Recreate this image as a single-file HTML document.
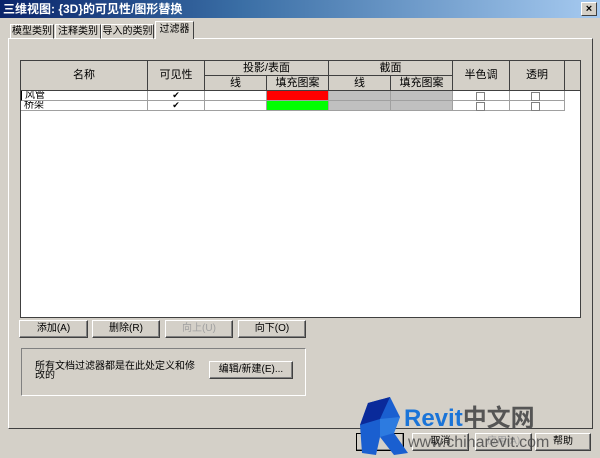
<!DOCTYPE html>
<html><head><meta charset="utf-8"><style>
*{margin:0;padding:0;box-sizing:border-box}
body{width:600px;height:458px;background:#d4d0c8;position:relative;overflow:hidden;font-family:"Liberation Sans","SimSun","Noto Sans CJK SC",sans-serif;font-size:11px;color:#000}
.a{position:absolute}
.title{left:0;top:0;width:600px;height:18px;background:linear-gradient(90deg,#0a246a 0%,#3a6ea5 40%,#a6caf0 100%);color:#fff;font-weight:bold;font-size:12px;line-height:18px;padding-left:3px}
.x{right:3px;top:2px;width:16px;height:14px;background:#d4d0c8;border:1px solid;border-color:#fff #404040 #404040 #fff;font-size:11px;line-height:12px;text-align:center;font-weight:bold;color:#000}
.tab{top:24px;height:15px;line-height:14px;border:1px solid;border-color:#fff #404040 transparent #fff;font-size:10px;text-align:center;overflow:hidden;white-space:nowrap}
.panel{left:8px;top:38px;width:585px;height:391px;border:1px solid;border-color:#fff #404040 #404040 #fff}
.tbl{left:20px;top:60px;width:561px;height:258px;background:#fff;border:1px solid #404040}
.h{background:#d4d0c8;border-right:1px solid #404040;border-bottom:1px solid #404040;text-align:center;font-size:11px}
.c{border-right:1px solid #a0a0a0;border-bottom:1px solid #a0a0a0;font-size:10px;overflow:hidden}
.btn{height:18px;border:1px solid;border-color:#fff #404040 #404040 #fff;box-shadow:inset -1px -1px #808080;text-align:center;line-height:16px;font-size:10px;white-space:nowrap;overflow:hidden}
.cb{width:9px;height:9px;border:1px solid #808080;background:#fff}
</style></head><body>
<div class="a title">三维视图: {3D}的可见性/图形替换</div>
<div class="a x">×</div>
<div class="a panel"></div>
<div class="a tab" style="left:10px;width:44px">模型类别</div>
<div class="a tab" style="left:55px;width:46px">注释类别</div>
<div class="a tab" style="left:101px;width:53px">导入的类别</div>
<div class="a tab" style="left:155px;top:21px;width:39px;height:18px;line-height:16px;background:#d4d0c8;border-bottom:none">过滤器</div>

<div class="a tbl"></div>
<div class="a h" style="left:21px;top:61px;width:127px;height:30px;line-height:29px">名称</div>
<div class="a h" style="left:148px;top:61px;width:57px;height:30px;line-height:29px">可见性</div>
<div class="a h" style="left:205px;top:61px;width:124px;height:15px;line-height:14px">投影/表面</div>
<div class="a h" style="left:205px;top:76px;width:62px;height:15px;line-height:14px">线</div>
<div class="a h" style="left:267px;top:76px;width:62px;height:15px;line-height:14px">填充图案</div>
<div class="a h" style="left:329px;top:61px;width:124px;height:15px;line-height:14px">截面</div>
<div class="a h" style="left:329px;top:76px;width:62px;height:15px;line-height:14px">线</div>
<div class="a h" style="left:391px;top:76px;width:62px;height:15px;line-height:14px">填充图案</div>
<div class="a h" style="left:453px;top:61px;width:57px;height:30px;line-height:29px">半色调</div>
<div class="a h" style="left:510px;top:61px;width:55px;height:30px;line-height:29px">透明</div>
<div class="a h" style="left:565px;top:61px;width:15px;height:30px;border-right:none"></div>

<div class="a c" style="left:21px;top:91px;width:127px;height:10px;line-height:10px;padding-left:3px;border-left:1px solid #000">风管</div>
<div class="a c" style="left:21px;top:101px;width:127px;height:10px;line-height:10px;padding-left:3px">桥架</div>
<div class="a c" style="left:148px;top:91px;width:57px;height:10px;text-align:center;line-height:9px;font-size:9px">✔</div>
<div class="a c" style="left:148px;top:101px;width:57px;height:10px;text-align:center;line-height:9px;font-size:9px">✔</div>
<div class="a c" style="left:205px;top:91px;width:62px;height:10px"></div>
<div class="a c" style="left:205px;top:101px;width:62px;height:10px"></div>
<div class="a c" style="left:267px;top:91px;width:62px;height:10px;background:#f00"></div>
<div class="a c" style="left:267px;top:101px;width:62px;height:10px;background:#0f0"></div>
<div class="a c" style="left:329px;top:91px;width:62px;height:10px;background:#c0c0c0"></div>
<div class="a c" style="left:329px;top:101px;width:62px;height:10px;background:#c0c0c0"></div>
<div class="a c" style="left:391px;top:91px;width:62px;height:10px;background:#c0c0c0"></div>
<div class="a c" style="left:391px;top:101px;width:62px;height:10px;background:#c0c0c0"></div>
<div class="a c" style="left:453px;top:91px;width:57px;height:10px"></div>
<div class="a c" style="left:453px;top:101px;width:57px;height:10px"></div>
<div class="a c" style="left:510px;top:91px;width:55px;height:10px"></div>
<div class="a c" style="left:510px;top:101px;width:55px;height:10px"></div>
<div class="a cb" style="left:476px;top:92px"></div>
<div class="a cb" style="left:476px;top:102px"></div>
<div class="a cb" style="left:531px;top:92px"></div>
<div class="a cb" style="left:531px;top:102px"></div>

<div class="a btn" style="left:19px;top:320px;width:69px">添加(A)</div>
<div class="a btn" style="left:92px;top:320px;width:68px">删除(R)</div>
<div class="a btn" style="left:165px;top:320px;width:68px;color:#a0a0a0">向上(U)</div>
<div class="a btn" style="left:238px;top:320px;width:68px">向下(O)</div>

<div class="a" style="left:21px;top:348px;width:285px;height:48px;border:1px solid;border-color:#808080 #fff #fff #808080"></div>
<div class="a" style="left:35px;top:362px;width:160px;font-size:10px;line-height:9px">所有文档过滤器都是在此处定义和修改的</div>
<div class="a btn" style="left:209px;top:361px;width:84px">编辑/新建(E)...</div>

<div class="a btn" style="left:356px;top:433px;width:48px;border:1px solid #000"></div>
<div class="a btn" style="left:412px;top:433px;width:57px">取消</div>
<div class="a btn" style="left:475px;top:433px;width:57px;color:#a0a0a0">应用(A)</div>
<div class="a btn" style="left:535px;top:433px;width:56px">帮助</div>

<svg class="a" style="left:350px;top:395px" width="80" height="62" viewBox="0 0 80 62">
<polygon points="18,8 40,2 50,22 44,38 58,58 44,60 30,42 26,60 12,58 10,30" fill="#1a5fd0"/>
<polygon points="18,8 40,2 30,24 10,30" fill="#0a2a9a"/>
<polygon points="30,24 50,22 44,38 30,42" fill="#2d7be0"/>
</svg>
<div class="a" style="left:404px;top:402px;font-size:24px;font-weight:bold;color:#1a74d8;font-family:'Liberation Sans',sans-serif;line-height:28px;white-space:nowrap">Revit<span style="color:#555;font-family:'Noto Sans CJK SC',sans-serif">中文网</span></div>
<div class="a" style="left:408px;top:433px;font-size:16px;color:#444;opacity:.8;line-height:20px;white-space:nowrap">www.chinarevit.com</div>
</body></html>
